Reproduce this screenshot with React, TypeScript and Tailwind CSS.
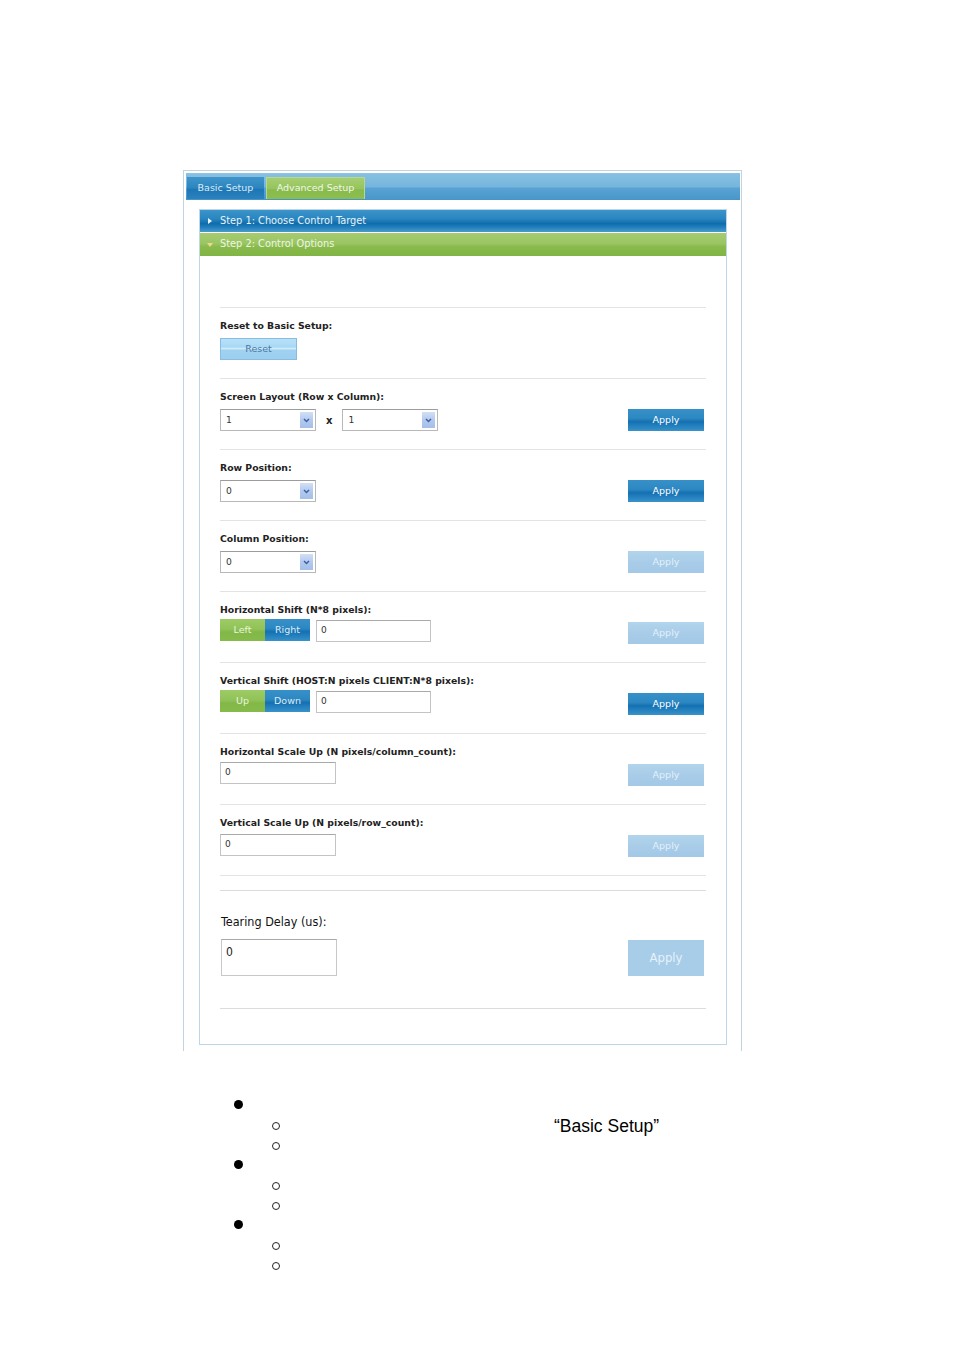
import React from "react";

const V: React.CSSProperties = { fontFamily: '"DejaVu Sans", Verdana, sans-serif' };
const C: React.CSSProperties = {
  fontFamily: '"DejaVu Sans Condensed", "Liberation Sans Narrow", "Roboto Condensed", "Liberation Sans", sans-serif',
};

function Chevron() {
  return (
    <svg width="7" height="5" viewBox="0 0 7 5">
      <path d="M1 1 L3.5 3.6 L6 1" stroke="#3d5f9e" strokeWidth="1.4" fill="none" />
    </svg>
  );
}

function Select({ value }: { value: string }) {
  return (
    <div className="flex h-[22px] w-[96px] items-center justify-between border border-[#b8b8b8] border-t-[#9c9c9c] bg-white pl-[5px] pr-[2px] text-[9.2px] text-[#333]">
      <span>{value}</span>
      <div className="flex h-[16px] w-[13px] items-center justify-center bg-[linear-gradient(to_bottom,#d2e0f6,#b3c9ee_50%,#a5bfe9)]">
        <Chevron />
      </div>
    </div>
  );
}

function Apply({ enabled }: { enabled: boolean }) {
  return enabled ? (
    <div className="flex h-[22px] w-[76px] items-center justify-center bg-[linear-gradient(to_bottom,#3790c8_0%,#2d88c2_42%,#1570b1_58%,#2683c0_80%,#3a92c8_100%)] text-[9.5px] text-white">
      Apply
    </div>
  ) : (
    <div className="flex h-[22px] w-[76px] items-center justify-center bg-[linear-gradient(to_bottom,#b2d4ec,#a8cce8_55%,#a3c9e7)] text-[9.5px] text-[#e4f0f9]">
      Apply
    </div>
  );
}

function GreenBtn({ label }: { label: string }) {
  return (
    <div className="flex h-[22px] w-[45px] items-center justify-center bg-[linear-gradient(to_bottom,#9dcb65,#91c358_45%,#82b848_60%,#86bb4c)] text-[9.5px] text-[#e9f5dc]">
      {label}
    </div>
  );
}

function BlueBtn({ label }: { label: string }) {
  return (
    <div className="flex h-[22px] w-[45px] items-center justify-center bg-[linear-gradient(to_bottom,#3790c8_0%,#2d88c2_42%,#1570b1_58%,#2683c0_80%,#3a92c8_100%)] text-[9.5px] text-[#dcebf7]">
      {label}
    </div>
  );
}

function TextInput({ w }: { w: string }) {
  return (
    <div
      className={`flex h-[22px] items-center border border-[#c4c4c4] border-t-[#a9a9a9] bg-white pl-[4px] text-[9px] text-[#333] ${w}`}
    >
      0
    </div>
  );
}

function Section({
  label,
  children,
  apply,
  gap,
}: {
  label: string;
  children: React.ReactNode;
  apply?: boolean;
  gap: string;
}) {
  return (
    <div className="flex h-[71px] justify-between border-t border-[#e3e3e3]">
      <div className="pt-[12px]">
        <div className="text-[9.3px] font-bold leading-[12px] text-[#222]">{label}</div>
        <div className={gap}>{children}</div>
      </div>
      {apply !== undefined && (
        <div className="pr-[2px] pt-[30px]">
          <Apply enabled={apply} />
        </div>
      )}
    </div>
  );
}

function Bullet() {
  return <div className="mb-[3px] h-[9px] w-[9px] rounded-full bg-black" />;
}

function Hollow() {
  return <div className="h-[8px] w-[8px] rounded-full border border-[#222]" />;
}

export default function App() {
  return (
    <div className="min-h-[1350px] w-[954px] bg-white pt-[170px]" style={V}>
      {/* outer frame */}
      <div className="ml-[183px] w-[559px] border-x border-t border-[#c2d4e0] pb-[6px] pt-[2px]">
        {/* tab bar */}
        <div className="ml-[2px] flex h-[27px] w-[554px] items-end border-y border-[#4a93c7] border-t-[#8fc3e3] bg-[linear-gradient(to_bottom,#86c1e2_0%,#76b5dc_50%,#58a2d3_58%,#4a97cc_100%)] pl-[1px]">
          <div className="flex h-[22px] w-[77px] items-center justify-center bg-[linear-gradient(to_bottom,#3f95ca,#2d85c0_50%,#1d76b5_56%,#2a82bd)] text-[9.5px] text-[#dcebf6]">
            Basic Setup
          </div>
          <div className="ml-[2px] flex h-[22px] w-[99px] items-center justify-center border-x border-t border-[#b6d890] bg-[linear-gradient(to_bottom,#a6ce70,#96c45e_50%,#88ba4c_56%,#8bbd4f)] text-[9.5px] text-[#f1f7e6]">
            Advanced Setup
          </div>
        </div>

        {/* inner panel */}
        <div className="ml-[15px] mt-[9px] w-[528px] border border-[#bcd7e8]">
          <div className="flex h-[22px] items-center bg-[linear-gradient(to_bottom,#3b93c9_0%,#2a86c0_40%,#0f6cab_62%,#2481be_80%,#4a9bcc_100%)] text-[9.8px] text-[#e9f3fa]">
            <svg className="ml-[8px]" width="4" height="6" viewBox="0 0 4 6">
              <path d="M0 0 L4 3 L0 6 Z" fill="#e9f3fa" />
            </svg>
            <span className="ml-[8px]">Step 1: Choose Control Target</span>
          </div>
          <div className="mt-[1px] flex h-[23px] items-center bg-[linear-gradient(to_bottom,#a5cc70_0%,#9bc563_45%,#88ba4c_60%,#80b444_100%)] text-[9.8px] text-[#eef6e2]">
            <svg className="ml-[7px]" width="6" height="4" viewBox="0 0 6 4">
              <path d="M0 0 L6 0 L3 4 Z" fill="#ecd98a" />
            </svg>
            <span className="ml-[7px]">Step 2: Control Options</span>
          </div>

          <div className="px-[20px]">
            <div className="h-[51px]" />

            <Section label="Reset to Basic Setup:" gap="mt-[6px]">
              <div className="flex h-[22px] w-[77px] items-center justify-center border border-[#86bde0] bg-[linear-gradient(to_bottom,#b9e1f8_0%,#a8d8f4_40%,#d2edfb_48%,#9fd2f1_56%,#9ccff0_100%)] text-[9.5px] text-[#4a77a0]">
                Reset
              </div>
            </Section>

            <Section label="Screen Layout (Row x Column):" gap="mt-[6px]" apply={true}>
              <div className="flex items-center">
                <Select value="1" />
                <span className="mx-[10px] text-[10px] font-bold text-[#222]">x</span>
                <Select value="1" />
              </div>
            </Section>

            <Section label="Row Position:" gap="mt-[6px]" apply={true}>
              <Select value="0" />
            </Section>

            <Section label="Column Position:" gap="mt-[6px]" apply={false}>
              <Select value="0" />
            </Section>

            <Section label="Horizontal Shift (N*8 pixels):" gap="mt-[3px]" apply={false}>
              <div className="flex items-start">
                <GreenBtn label="Left" />
                <BlueBtn label="Right" />
                <div className="ml-[6px] mt-[1px]">
                  <TextInput w="w-[115px]" />
                </div>
              </div>
            </Section>

            <Section label="Vertical Shift (HOST:N pixels CLIENT:N*8 pixels):" gap="mt-[3px]" apply={true}>
              <div className="flex items-start">
                <GreenBtn label="Up" />
                <BlueBtn label="Down" />
                <div className="ml-[6px] mt-[1px]">
                  <TextInput w="w-[115px]" />
                </div>
              </div>
            </Section>

            <Section label="Horizontal Scale Up (N pixels/column_count):" gap="mt-[4px]" apply={false}>
              <TextInput w="w-[116px]" />
            </Section>

            <Section label="Vertical Scale Up (N pixels/row_count):" gap="mt-[5px]" apply={false}>
              <TextInput w="w-[116px]" />
            </Section>

            <div className="h-[15px] border-t border-[#e3e3e3]" />

            {/* tearing delay (larger, condensed) */}
            <div className="flex h-[118px] justify-between border-t border-[#dcdcdc]" style={C}>
              <div className="pl-[1px] pt-[23px]">
                <div className="text-[12.5px] font-medium leading-[16px] text-[#111]">Tearing Delay (us):</div>
                <div className="mt-[9px] h-[37px] w-[116px] border border-[#c8c8c8] border-t-[#a8a8a8] bg-white pl-[4px] pt-[5px] text-[12px] leading-[14px] text-[#222]">
                  0
                </div>
              </div>
              <div className="pr-[2px] pt-[49px]">
                <div className="flex h-[36px] w-[76px] items-center justify-center bg-[#a8cde8] text-[13px] text-[#e6f1f9]">
                  Apply
                </div>
              </div>
            </div>

            <div className="h-[36px] border-t border-[#dcdcdc]" />
          </div>
        </div>
      </div>

      {/* bullet list */}
      <div className="mt-[45px]" style={{ fontFamily: '"Liberation Sans", Arial, sans-serif' }}>
        <div className="flex h-[20px] items-center pl-[234px]">
          <Bullet />
        </div>
        <div className="flex h-[20px] items-center pl-[272px]">
          <Hollow />
          <span className="ml-[274px] mb-[1px] text-[17.5px] leading-[20px] text-black">“Basic Setup”</span>
        </div>
        <div className="flex h-[20px] items-center pl-[272px]">
          <Hollow />
        </div>
        <div className="flex h-[20px] items-center pl-[234px]">
          <Bullet />
        </div>
        <div className="flex h-[20px] items-center pl-[272px]">
          <Hollow />
        </div>
        <div className="flex h-[20px] items-center pl-[272px]">
          <Hollow />
        </div>
        <div className="flex h-[20px] items-center pl-[234px]">
          <Bullet />
        </div>
        <div className="flex h-[20px] items-center pl-[272px]">
          <Hollow />
        </div>
        <div className="flex h-[20px] items-center pl-[272px]">
          <Hollow />
        </div>
      </div>
    </div>
  );
}
